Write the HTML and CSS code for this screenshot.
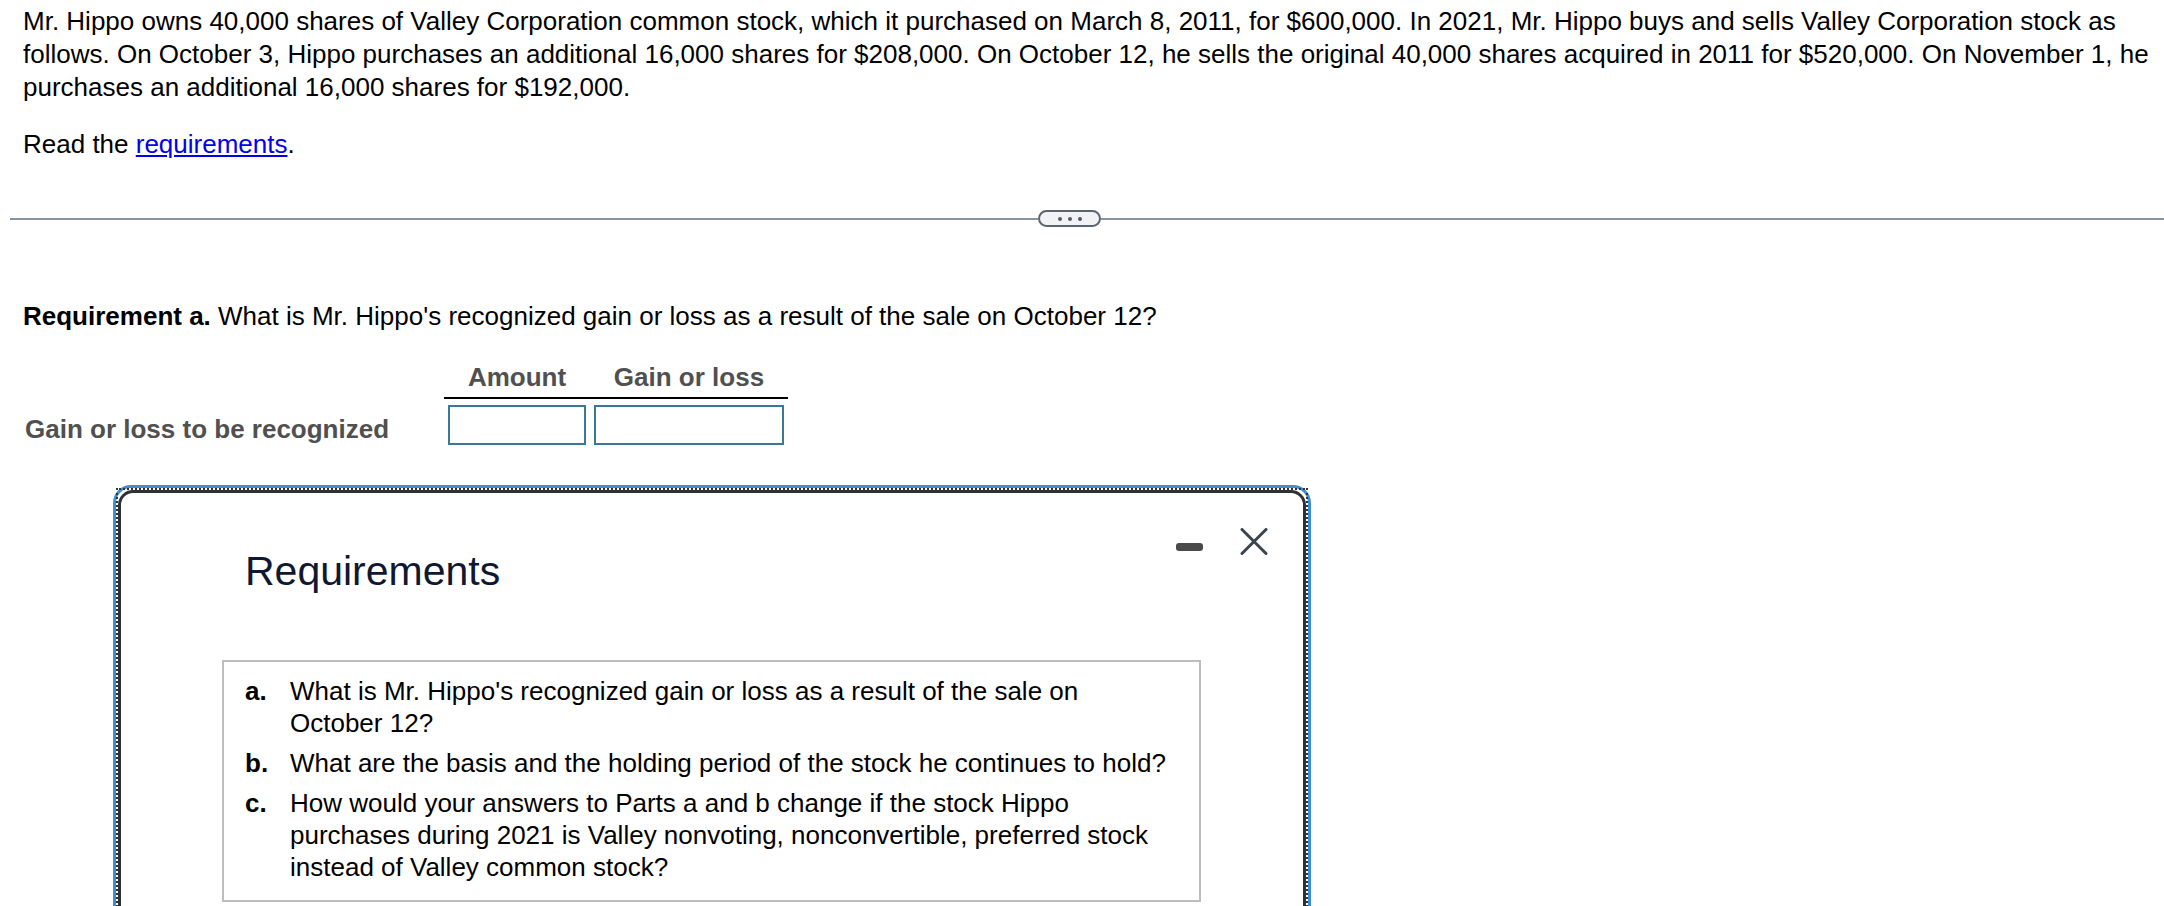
FILE: index.html
```html
<!DOCTYPE html>
<html lang="en">
<head>
<meta charset="utf-8">
<title>Requirement a</title>
<link rel="stylesheet" href="styles.css">
</head>
<body>
<div class="problem">
  <p class="para">Mr. Hippo owns 40,000 shares of Valley Corporation common stock, which it purchased on March 8, 2011, for $600,000. In 2021, Mr. Hippo buys and sells Valley Corporation stock as follows. On October 3, Hippo purchases an additional 16,000 shares for $208,000. On October 12, he sells the original 40,000 shares acquired in 2011 for $520,000. On November 1, he purchases an additional 16,000 shares for $192,000.</p>
  <p class="para read">Read the <a class="link" href="#">requirements</a>.</p>
</div>

<div class="divider">
  <span class="rule rule-left"></span>
  <span class="more"><span class="dot"></span><span class="dot"></span><span class="dot"></span></span>
  <span class="rule rule-right"></span>
</div>

<p class="req-title"><b>Requirement a.</b> What is Mr. Hippo's recognized gain or loss as a result of the sale on October 12?</p>

<div class="grid">
  <div class="cell empty"></div>
  <div class="cell head">Amount</div>
  <div class="cell head">Gain or loss</div>
  <div class="cell label">Gain or loss to be recognized</div>
  <div class="cell input-cell"><span class="box"></span></div>
  <div class="cell input-cell"><span class="box"></span></div>
</div>

<div class="frame">
  <div class="dialog">
    <div class="dialog-head">
      <h2 class="dialog-title">Requirements</h2>
      <div class="controls">
        <span class="minimize"></span>
        <svg class="close" width="28" height="27" viewBox="0 0 28 27"><path d="M2 1.5 L26 25.5 M26 1.5 L2 25.5" stroke="#3b4350" stroke-width="3" stroke-linecap="round" fill="none"/></svg>
      </div>
    </div>
    <div class="req-box">
      <div class="item"><span class="letter">a.</span><span class="text">What is Mr. Hippo's recognized gain or loss as a result of the sale on October 12?</span></div>
      <div class="item"><span class="letter">b.</span><span class="text">What are the basis and the holding period of the stock he continues to hold?</span></div>
      <div class="item"><span class="letter">c.</span><span class="text">How would your answers to Parts a and b change if the stock Hippo purchases during 2021 is Valley nonvoting, nonconvertible, preferred stock instead of Valley common stock?</span></div>
    </div>
  </div>
</div>
</body>
</html>
```

FILE: styles.css
```css
html, body {
  margin: 0;
  padding: 0;
  overflow: hidden;
  background: #ffffff;
}
body {
  font-family: "Liberation Sans", Arial, sans-serif;
  font-size: 26px;
  line-height: 32px;
  color: #000000;
}
.problem {
  padding: 5px 10px 0 23px;
  line-height: 33px;
}
.para {
  margin: 0;
}
.read {
  margin-top: 24px;
}
.link {
  color: #0000ee;
  text-decoration: underline;
}
.divider {
  display: flex;
  align-items: center;
  margin: 49px 0 0 10px;
  height: 17px;
}
.rule {
  height: 2px;
  background: #8a929e;
}
.rule-left {
  width: 1028px;
  flex: none;
}
.rule-right {
  flex: 1;
}
.more {
  box-sizing: border-box;
  width: 63px;
  height: 17px;
  border: 2px solid #5c6471;
  border-radius: 9px;
  background: #f1f2f5;
  display: flex;
  align-items: center;
  justify-content: center;
  gap: 6px;
  flex: none;
}
.dot {
  width: 4px;
  height: 4px;
  border-radius: 50%;
  background: #565b63;
}
.req-title {
  margin: 73px 0 0 23px;
}
.grid {
  display: grid;
  grid-template-columns: 419px 146px 198px;
  margin: 29px 0 0 25px;
}
.head {
  font-weight: bold;
  color: #505050;
  text-align: center;
  padding-bottom: 4px;
  border-bottom: 2px solid #000;
}
.label {
  font-weight: bold;
  color: #505050;
  align-self: end;
}
.input-cell {
  padding: 6px 4px 0 4px;
}
.box {
  display: block;
  box-sizing: border-box;
  height: 40px;
  border: 2px solid #3b7797;
  background: #fff;
}
.frame {
  position: relative;
  box-sizing: border-box;
  width: 1198px;
  margin: 40px 0 0 113px;
  border: 3px solid #3d8fd4;
  border-radius: 18px;
  padding: 2px;
}
.frame::after {
  content: "";
  position: absolute;
  top: 0;
  left: 0;
  right: 0;
  bottom: 0;
  border-top: 2px dotted #333;
  border-left: 2px dotted #333;
  border-right: 2px dotted #333;
  pointer-events: none;
}
.dialog {
  border: 3px solid #2e3236;
  border-radius: 15px;
  background: #fff;
  padding-bottom: 40px;
}
.dialog-head {
  display: flex;
  justify-content: space-between;
  align-items: flex-start;
  padding: 35px 35px 0 124px;
}
.dialog-title {
  margin: 19px 0 0 0;
  font-size: 41px;
  line-height: 48px;
  font-weight: normal;
  color: #0f1830;
}
.controls {
  display: flex;
  align-items: flex-start;
  gap: 37px;
}
.minimize {
  display: block;
  width: 27px;
  height: 8px;
  border-radius: 3px;
  background: #4a4a4a;
  margin-top: 15px;
}
.close {
  display: block;
}
.req-box {
  margin: 65px 102px 0 101px;
  border: 2px solid #bdbdbd;
  padding: 13px 30px 17px 21px;
}
.item {
  display: grid;
  grid-template-columns: 45px 1fr;
}
.item + .item {
  margin-top: 8px;
}
.letter {
  font-weight: bold;
}
```
